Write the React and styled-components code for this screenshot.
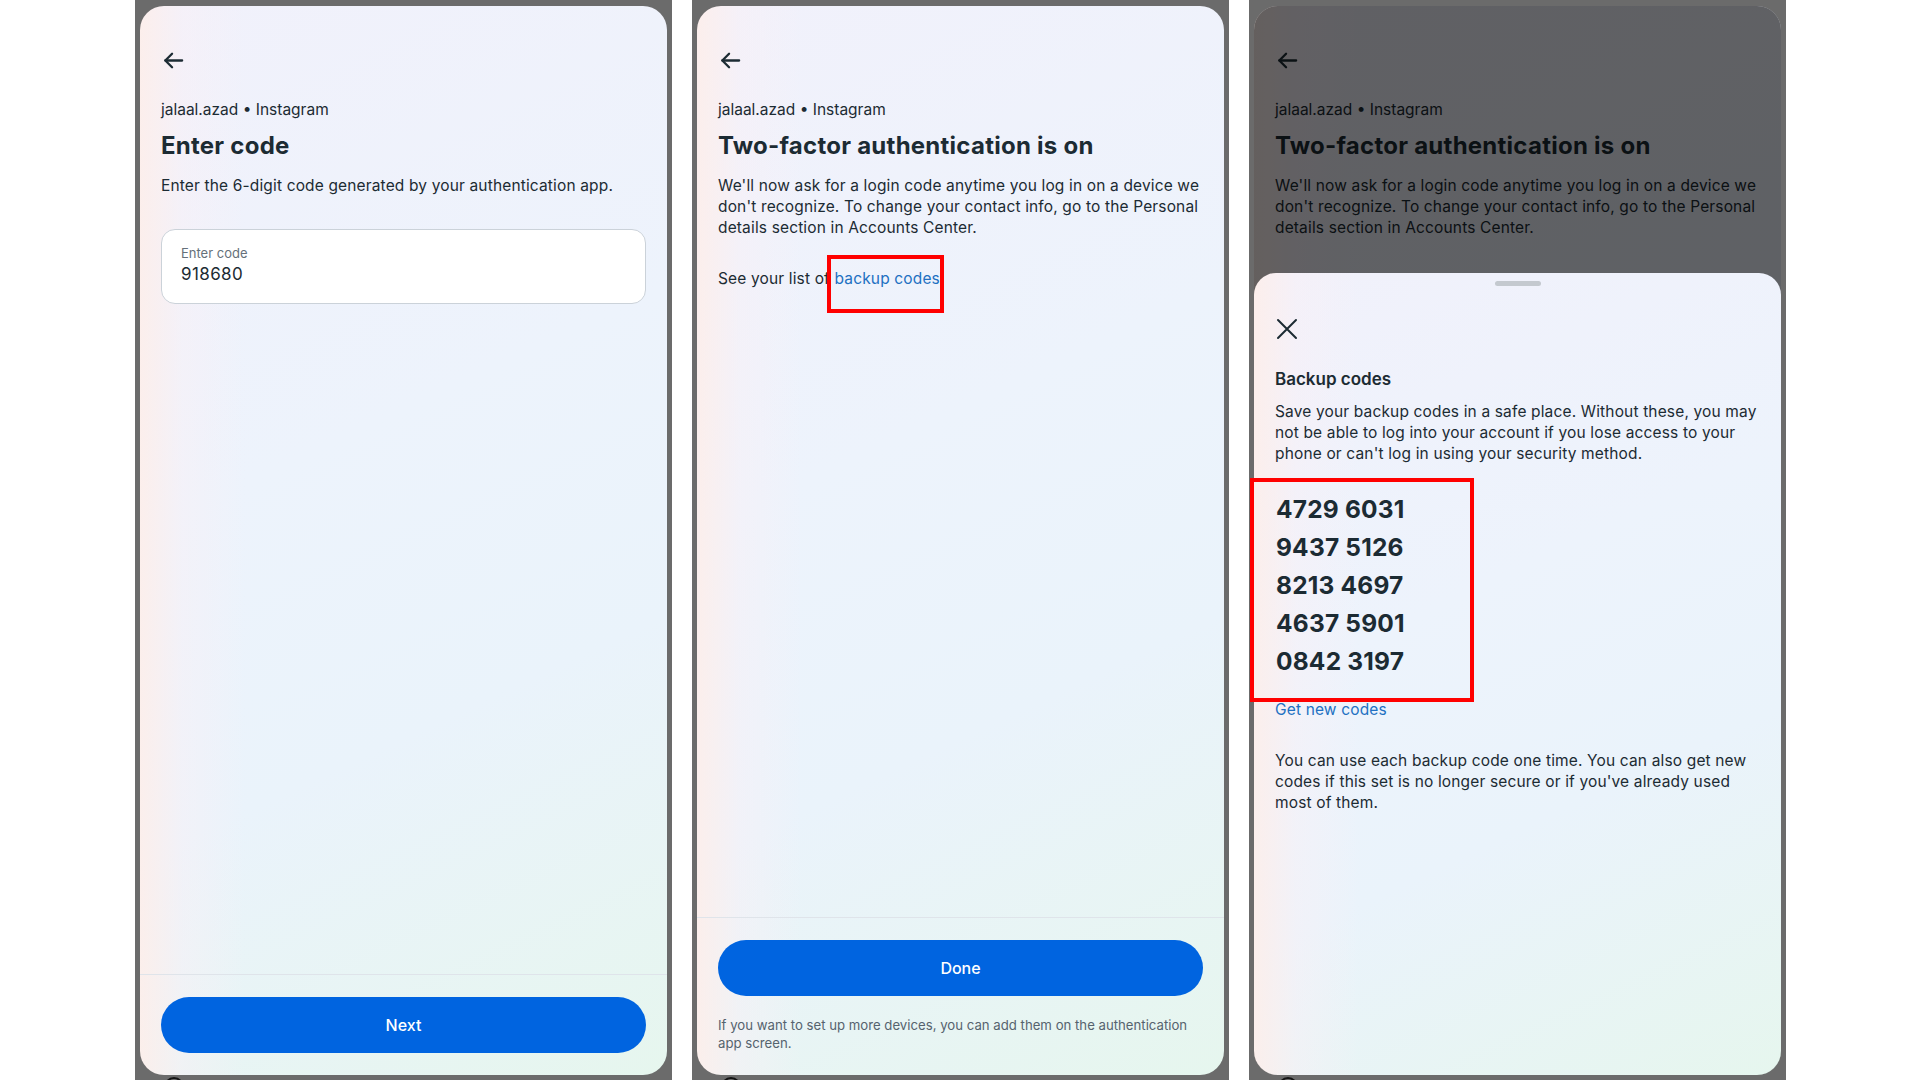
import React from "react";
import styled, { createGlobalStyle } from "styled-components";

const GlobalStyle = createGlobalStyle`
  html, body {
    margin: 0;
    padding: 0;
    background: #ffffff;
  }
  body {
    font-family: Inter, "Noto Sans", "Liberation Sans", sans-serif;
    color: #1c2b33;
  }
  * {
    box-sizing: border-box;
  }
`;

const meta_bg = `
  linear-gradient(90deg, rgba(253, 238, 234, 0.9) 0%, rgba(250, 240, 245, 0.45) 8%, rgba(246, 240, 250, 0) 20%),
  linear-gradient(155deg, #f1f1fb 0%, #edf3fc 40%, #eaf3fb 65%, #e6f6ee 100%)
`;

const Page = styled.div`
  display: flex;
  gap: 20px;
  padding-left: 135px;
  height: 1080px;
  overflow: hidden;
`;

const Frame = styled.div`
  width: 537px;
  height: 1080px;
  flex: none;
  background: #6b6b6b;
  padding: 6px 5px 0;
  display: flex;
  flex-direction: column;
  overflow: hidden;
`;

const Card = styled.div`
  position: relative;
  height: 1069px;
  flex: none;
  border-radius: 24px;
  background: ${meta_bg};
  display: flex;
  flex-direction: column;
`;

const NavHint = styled.div`
  width: 20px;
  height: 20px;
  flex: none;
  margin: 2px 0 0 24px;
  border: 2px solid #141414;
  border-radius: 50%;
`;

const Content = styled.div`
  flex: 1;
  padding: 42px 21px 0;
  display: flex;
  flex-direction: column;
`;

const IconButton = styled.button`
  width: 24px;
  height: 24px;
  margin-top: ${(p) => p.$mt || 0}px;
  padding: 0;
  border: none;
  background: none;
  color: #1c2b33;
  display: flex;
  align-items: center;
  justify-content: center;
  svg {
    display: block;
  }
`;

const Account = styled.div`
  margin-top: 28px;
  font-size: 15.5px;
  line-height: 20px;
  color: #1c2b33;
`;

const Title = styled.h1`
  margin: 11px 0 0;
  font-size: 24px;
  line-height: 30px;
  font-weight: 700;
  color: #1c2b33;
  letter-spacing: 0.25px;
`;

const Text = styled.p`
  margin: ${(p) => p.$mt || 0}px 0 0;
  font-size: ${(p) => p.$size || 15.5}px;
  line-height: ${(p) => p.$lh || 21}px;
  letter-spacing: ${(p) => (p.$muted ? 0 : 0.15)}px;
  color: ${(p) => (p.$muted ? "#56636e" : "#1c2b33")};
`;

const Link = styled.span`
  position: relative;
  color: #2170c2;
`;

const Marker = styled.span`
  position: absolute;
  left: ${(p) => p.$left}px;
  top: ${(p) => p.$top}px;
  width: ${(p) => p.$w}px;
  height: ${(p) => p.$h}px;
  border: 4px solid #ff0000;
  pointer-events: none;
`;

const Field = styled.div`
  margin-top: 33px;
  height: 75px;
  border: 1px solid #cbd2d9;
  border-radius: 14px;
  background: #ffffff;
  padding: 15px 19px;
  display: flex;
  flex-direction: column;
  gap: 3px;
`;

const FieldLabel = styled.span`
  font-size: 13px;
  line-height: 16px;
  color: #65707a;
`;

const FieldValue = styled.span`
  font-size: 17px;
  line-height: 21px;
  color: #1c2b33;
  letter-spacing: 0.4px;
`;

const Footer = styled.div`
  border-top: 1px solid #dfe4ea;
  padding: 22px 21px ${(p) => p.$pb || 22}px;
  display: flex;
  flex-direction: column;
  gap: 20px;
`;

const PrimaryButton = styled.button`
  height: 56px;
  width: 100%;
  border: none;
  border-radius: 28px;
  background: #0064e0;
  color: #ffffff;
  font-family: inherit;
  font-size: 16px;
  font-weight: 500;
`;

const Overlay = styled.div`
  position: absolute;
  inset: 0;
  border-radius: 24px;
  background: rgba(0, 0, 0, 0.6);
`;

const Sheet = styled.div`
  position: absolute;
  left: 0;
  right: 0;
  bottom: 0;
  top: 267px;
  border-radius: 22px 22px 24px 24px;
  background: ${meta_bg};
  padding: 8px 21px 0;
  display: flex;
  flex-direction: column;
`;

const Handle = styled.div`
  align-self: center;
  width: 46px;
  height: 5px;
  border-radius: 3px;
  background: #c4c9cf;
`;

const SheetTitle = styled.h2`
  margin: 27px 0 0;
  font-size: 17px;
  line-height: 22px;
  font-weight: 600;
  color: #1c2b33;
`;

const CodesBox = styled.div`
  margin: 14px 0 0 -25px;
  width: 224px;
  border: 4px solid #ff0000;
  padding: 8px 0 18px 22px;
`;

const Code = styled.div`
  font-size: 24.5px;
  line-height: 38px;
  font-weight: 700;
  color: #1c2b33;
  letter-spacing: 0.2px;
`;

const TextLink = styled.a`
  margin-top: -2px;
  font-size: 15.5px;
  line-height: 20px;
  letter-spacing: 0.15px;
  color: #2170c2;
  text-decoration: none;
`;

const ArrowLeft = () => (
  <svg width="23" height="23" viewBox="0 0 24 24" fill="none" stroke="currentColor" strokeWidth="2.4" strokeLinecap="round" strokeLinejoin="round">
    <path d="M21 12H3.5" />
    <path d="M10.5 5 3.5 12l7 7" />
  </svg>
);

const CloseIcon = () => (
  <svg width="24" height="24" viewBox="0 0 24 24" fill="none" stroke="currentColor" strokeWidth="2" strokeLinecap="round">
    <path d="M3 3l18 18M21 3 3 21" />
  </svg>
);

const codes = ["4729 6031", "9437 5126", "8213 4697", "4637 5901", "0842 3197"];

const EnterCodeScreen = () => (
  <Frame>
    <Card>
      <Content>
        <IconButton><ArrowLeft /></IconButton>
        <Account>jalaal.azad • Instagram</Account>
        <Title>Enter code</Title>
        <Text $mt={14}>Enter the 6-digit code generated by your authentication app.</Text>
        <Field>
          <FieldLabel>Enter code</FieldLabel>
          <FieldValue>918680</FieldValue>
        </Field>
      </Content>
      <Footer>
        <PrimaryButton>Next</PrimaryButton>
      </Footer>
    </Card>
    <NavHint />
  </Frame>
);

const TwoFactorContent = ({ marked, covered }) => (
  <>
    <Content>
      <IconButton><ArrowLeft /></IconButton>
      <Account>jalaal.azad • Instagram</Account>
      <Title>Two-factor authentication is on</Title>
      <Text $mt={14}>
        We'll now ask for a login code anytime you log in on a device we don't recognize. To change your contact info, go to the Personal details section in Accounts Center.
      </Text>
      {!covered && (
        <Text $mt={30}>
          See your list of{" "}
          <Link>
            backup codes
            {marked && <Marker $left={-8} $top={-14} $w={117} $h={58} />}
          </Link>
          .
        </Text>
      )}
    </Content>
    <Footer $pb={23}>
      <PrimaryButton>Done</PrimaryButton>
      <Text $size={13.2} $lh={18} $muted>
        If you want to set up more devices, you can add them on the authentication app screen.
      </Text>
    </Footer>
  </>
);

const DoneScreen = () => (
  <Frame>
    <Card>
      <TwoFactorContent marked />
    </Card>
    <NavHint />
  </Frame>
);

const BackupCodesScreen = () => (
  <Frame>
    <Card>
      <TwoFactorContent covered />
      <Overlay />
      <Sheet>
        <Handle />
        <IconButton $mt={31}><CloseIcon /></IconButton>
        <SheetTitle>Backup codes</SheetTitle>
        <Text $mt={11}>
          Save your backup codes in a safe place. Without these, you may not be able to log into your account if you lose access to your phone or can't log in using your security method.
        </Text>
        <CodesBox>
          {codes.map((c) => (
            <Code key={c}>{c}</Code>
          ))}
        </CodesBox>
        <TextLink>Get new codes</TextLink>
        <Text $mt={30}>
          You can use each backup code one time. You can also get new codes if this set is no longer secure or if you've already used most of them.
        </Text>
      </Sheet>
    </Card>
    <NavHint />
  </Frame>
);

export default function App() {
  return (
    <>
      <GlobalStyle />
      <Page>
        <EnterCodeScreen />
        <DoneScreen />
        <BackupCodesScreen />
      </Page>
    </>
  );
}
